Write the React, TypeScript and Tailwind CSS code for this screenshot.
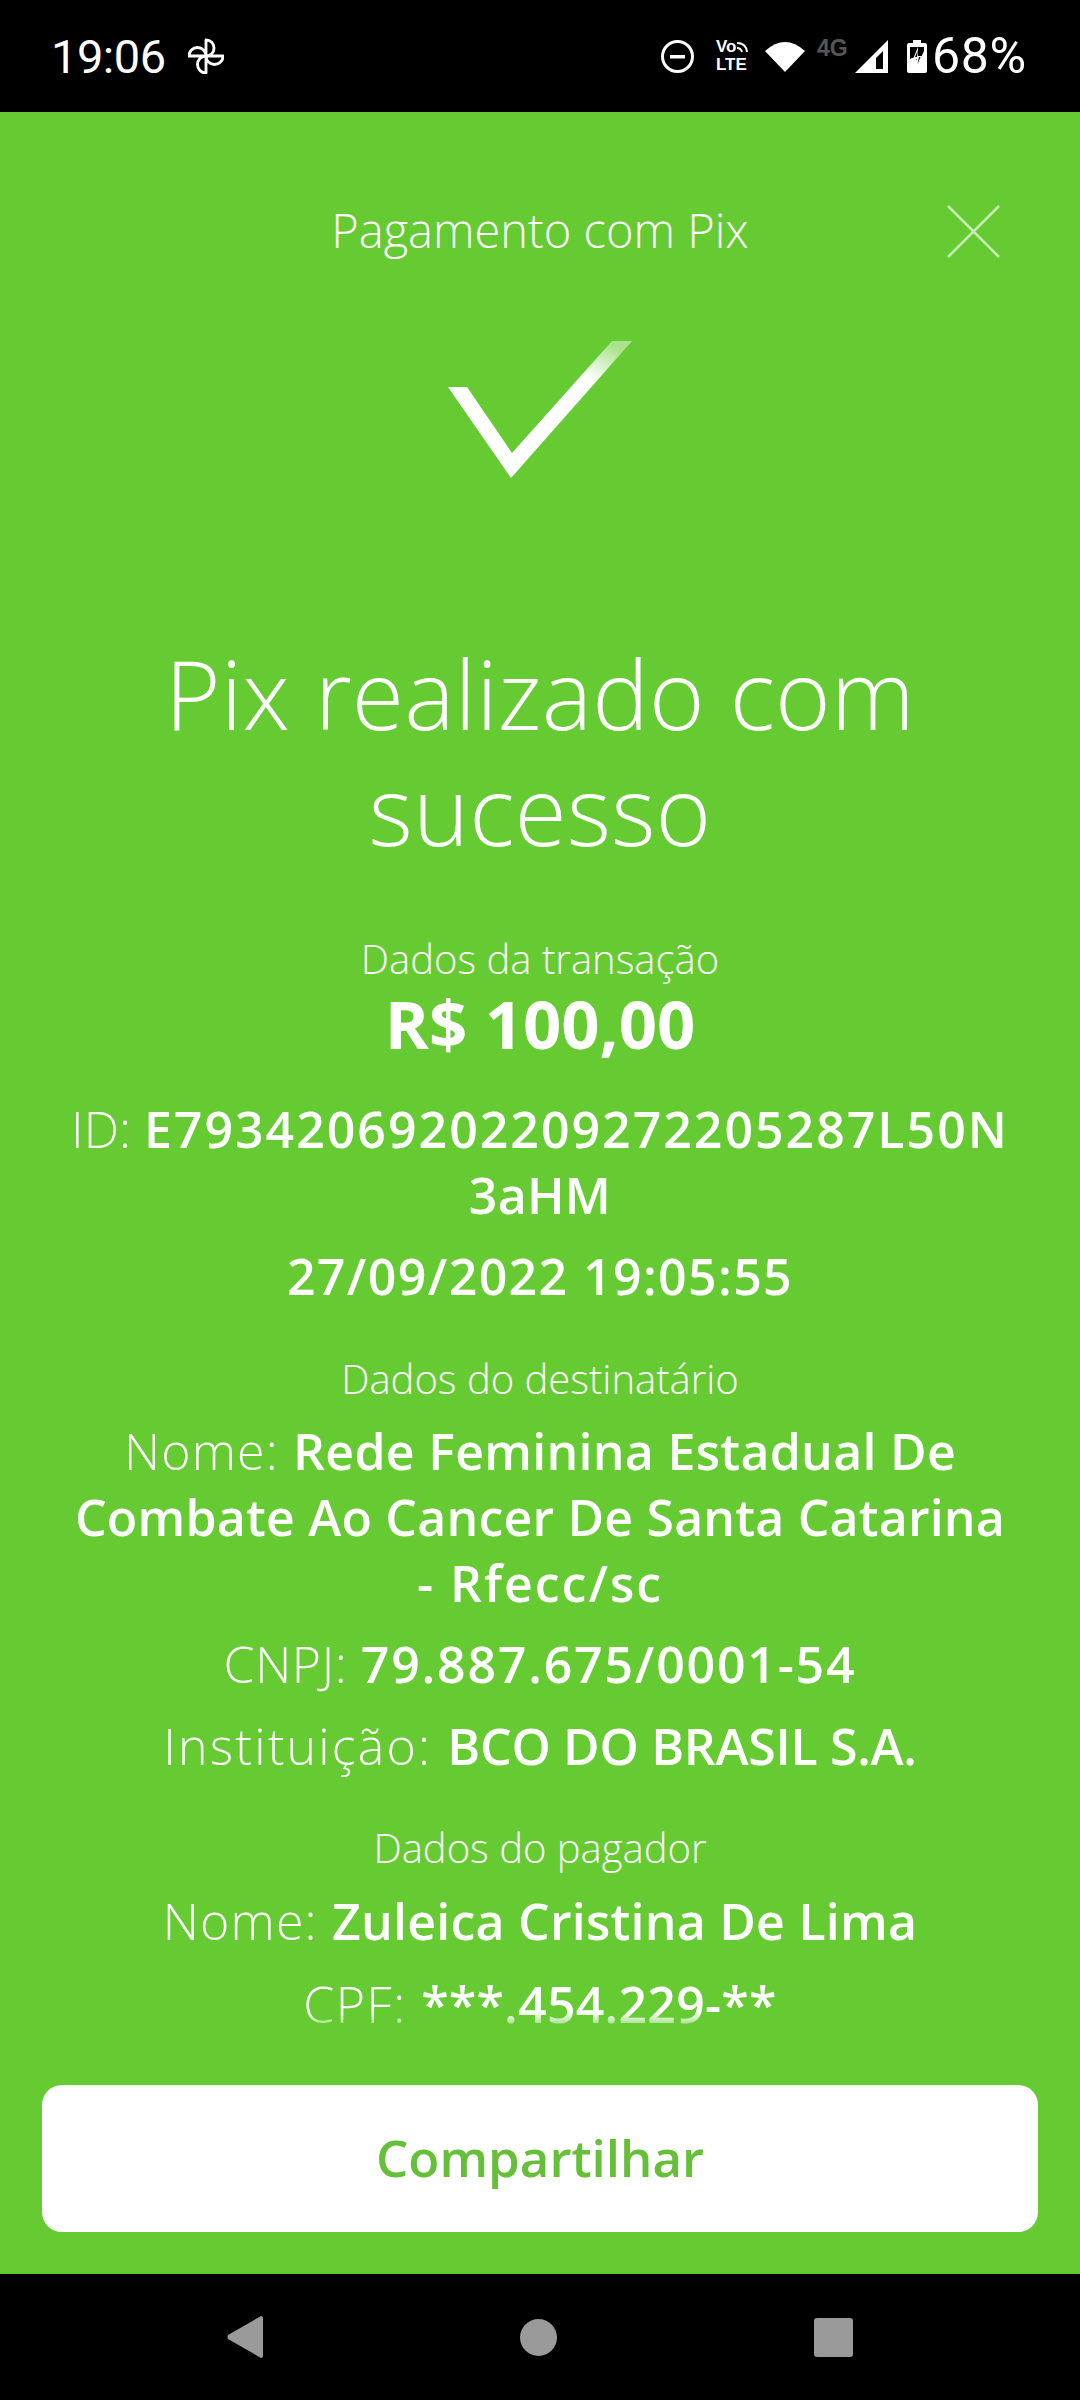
import React from "react";

function Label({ children }: { children: React.ReactNode }) {
  return <p className="text-[40px] leading-[44px] font-light">{children}</p>;
}
function Row({ k, v, className, keyClass }: { k?: string; v: string; className?: string; keyClass?: string }) {
  return (
    <p className="text-[50px] leading-[66px] whitespace-nowrap">
      {k && <span className={"font-light " + (keyClass ?? "")}>{k} </span>}
      <span className={"font-semibold " + (className ?? "")}>{v}</span>
    </p>
  );
}

export default function App() {
  return (
    <div className="w-[1080px] h-[2400px] flex flex-col bg-black text-white font-['Open_Sans',sans-serif] overflow-hidden">
      <div className="h-[112px] shrink-0 flex items-center justify-between pl-[51px] pr-[53px] font-['Roboto',sans-serif]">
        <div className="flex items-center">
          <span className="w-[137px] text-[47px] leading-none tracking-[-0.5px]">19:06</span>
          <svg width="36" height="36" viewBox="16 9 38 38" fill="none" stroke="#fff" strokeWidth="3" strokeLinejoin="round">
            <path d="M35 28V11a8.5 8.5 0 0 1 0 17ZM35 28H53a9 9 0 0 1-18 0ZM35 28V46a9 9 0 0 1 0-18ZM35 28H17a9 9 0 0 1 18 0Z" />
          </svg>
        </div>
        <div className="flex items-center">
          <svg width="33" height="33" viewBox="0 0 33 33" fill="none" stroke="#fff" strokeWidth="3">
            <circle cx="16.5" cy="16.5" r="15" />
            <rect x="9" y="15" width="15" height="3.5" fill="#fff" stroke="none" />
          </svg>
          <div className="ml-[22px] w-[34px] flex flex-col text-[17px] leading-[18px] font-bold font-['Liberation_Sans',sans-serif]">
            <div className="flex items-center">
              <span>Vo</span>
              <svg width="12" height="12" viewBox="0 0 12 12" fill="none" stroke="#fff" strokeWidth="2">
                <path d="M1 2Q10 2 11 11M1 7Q5 7 6 11" />
              </svg>
            </div>
            <span>LTE</span>
          </div>
          <svg width="40" height="32" viewBox="0 0 40 32" className="ml-[15px]">
            <path d="M0 11Q20 -7 40 11L20 32Z" fill="#fff" />
          </svg>
          <span className="ml-[12px] w-[31px] text-[23px] leading-none font-bold text-[#565656] -mt-[16px] font-['Liberation_Sans',sans-serif]">4G</span>
          <svg width="33" height="33" viewBox="0 0 33 33" className="ml-[7px]">
            <path d="M0 33L33 0V33ZM21 29H28V11L21 18Z" fill="#fff" fillRule="evenodd" />
          </svg>
          <svg width="20" height="33" viewBox="0 0 20 33" className="ml-[19px]">
            <path d="M6 0H14V3H18Q20 3 20 5V31Q20 33 18 33H2Q0 33 0 31V5Q0 3 2 3H6Z" fill="#fff" />
            <path d="M3 7H17V11L11 24L9 18H5L3 19Z" fill="#000" />
            <path d="M11 7L6 19H10L9 29L15 16H11Z" fill="#fff" />
            <path d="M11 10L8 17H12L10.5 24L13.5 17H10Z" fill="#000" />
          </svg>
          <span className="ml-[5px] w-[95px] text-[50px] leading-none tracking-[0.7px] whitespace-nowrap">68%</span>
        </div>
      </div>

      <main className="h-[2162px] shrink-0 bg-[#66cb33] flex flex-col">
        <div className="relative h-[1913px] shrink-0 overflow-hidden text-center">
          <header className="h-[236px] flex items-center justify-center text-[47px] font-light">
            Pagamento com Pix
            <svg width="53" height="53" viewBox="0 0 53 53" className="absolute left-[947px] top-[93px]" stroke="#fff" strokeOpacity="0.65" strokeWidth="2.5">
              <path d="M1 1L52 52M52 1L1 52" />
            </svg>
          </header>
          <div className="flex justify-center -mt-[7px]">
            <svg width="184" height="137" viewBox="0 0 184 137">
              <defs>
                <linearGradient id="fade" x1="0" y1="1" x2="0.85" y2="0">
                  <stop offset="0.8" stopColor="#fff" />
                  <stop offset="1" stopColor="#fff" stopOpacity="0.45" />
                </linearGradient>
              </defs>
              <path d="M0 46H19L64 112L164 0H184L63 137Z" fill="url(#fade)" />
            </svg>
          </div>
          <h1 className="mt-[157px] text-[95px] leading-[116px] tracking-[0.15px] font-light">
            Pix realizado com
            <br />
            sucesso
          </h1>
          <div className="mt-[70px]"><Label>Dados da transação</Label></div>
          <p className="text-[67px] leading-[84px] font-bold">R$ 100,00</p>
          <div className="mt-[31px]">
            <Row k="ID:" v="E79342069202209272205287L50N" className="tracking-[2px]" />
            <Row v="3aHM" className="tracking-[0.3px]" />
          </div>
          <div className="mt-[15px]"><Row v="27/09/2022 19:05:55" className="tracking-[1.4px]" /></div>
          <div className="mt-[48px]"><Label>Dados do destinatário</Label></div>
          <div className="mt-[17px]">
            <Row k="Nome:" v="Rede Feminina Estadual De" keyClass="tracking-[1.2px]" className="tracking-[0.3px]" />
            <Row v="Combate Ao Cancer De Santa Catarina" className="tracking-[0.2px]" />
            <Row v="- Rfecc/sc" className="tracking-[2px]" />
          </div>
          <div className="mt-[15px]"><Row k="CNPJ:" v="79.887.675/0001-54" keyClass="tracking-[0.6px]" className="tracking-[1.8px]" /></div>
          <div className="mt-[16px]"><Row k="Instituição:" v="BCO DO BRASIL S.A." keyClass="tracking-[2.2px]" className="tracking-[-0.3px]" /></div>
          <div className="mt-[47px]"><Label>Dados do pagador</Label></div>
          <div className="mt-[18px]"><Row k="Nome:" v="Zuleica Cristina De Lima" keyClass="tracking-[1.2px]" className="tracking-[0.25px]" /></div>
          <div className="mt-[17px]"><Row k="CPF:" v="***.454.229-**" keyClass="tracking-[1.5px]" className="tracking-[0.25px]" /></div>
          <div className="absolute left-0 right-0 bottom-0 h-[13px] bg-gradient-to-b from-[#66cb3300] to-[#66cb3399]" />
        </div>
        <div className="mt-[60px] mx-[42px] h-[147px] rounded-[20px] bg-white flex items-center justify-center pb-[2px] text-[51px] font-semibold text-[#66bf38]">
          Compartilhar
        </div>
      </main>

      <nav className="flex-1 flex items-center justify-center gap-[257px]">
        <svg width="36" height="42" viewBox="0 0 36 42"><path d="M34 0Q36 0 36 2V40Q36 42 34 42L1 23Q0 21 1 19Z" fill="#9a9a9a" /></svg>
        <div className="w-[37px] h-[37px] rounded-full bg-[#9a9a9a]" />
        <div className="w-[39px] h-[39px] rounded-[3px] bg-[#9a9a9a]" />
      </nav>
    </div>
  );
}
